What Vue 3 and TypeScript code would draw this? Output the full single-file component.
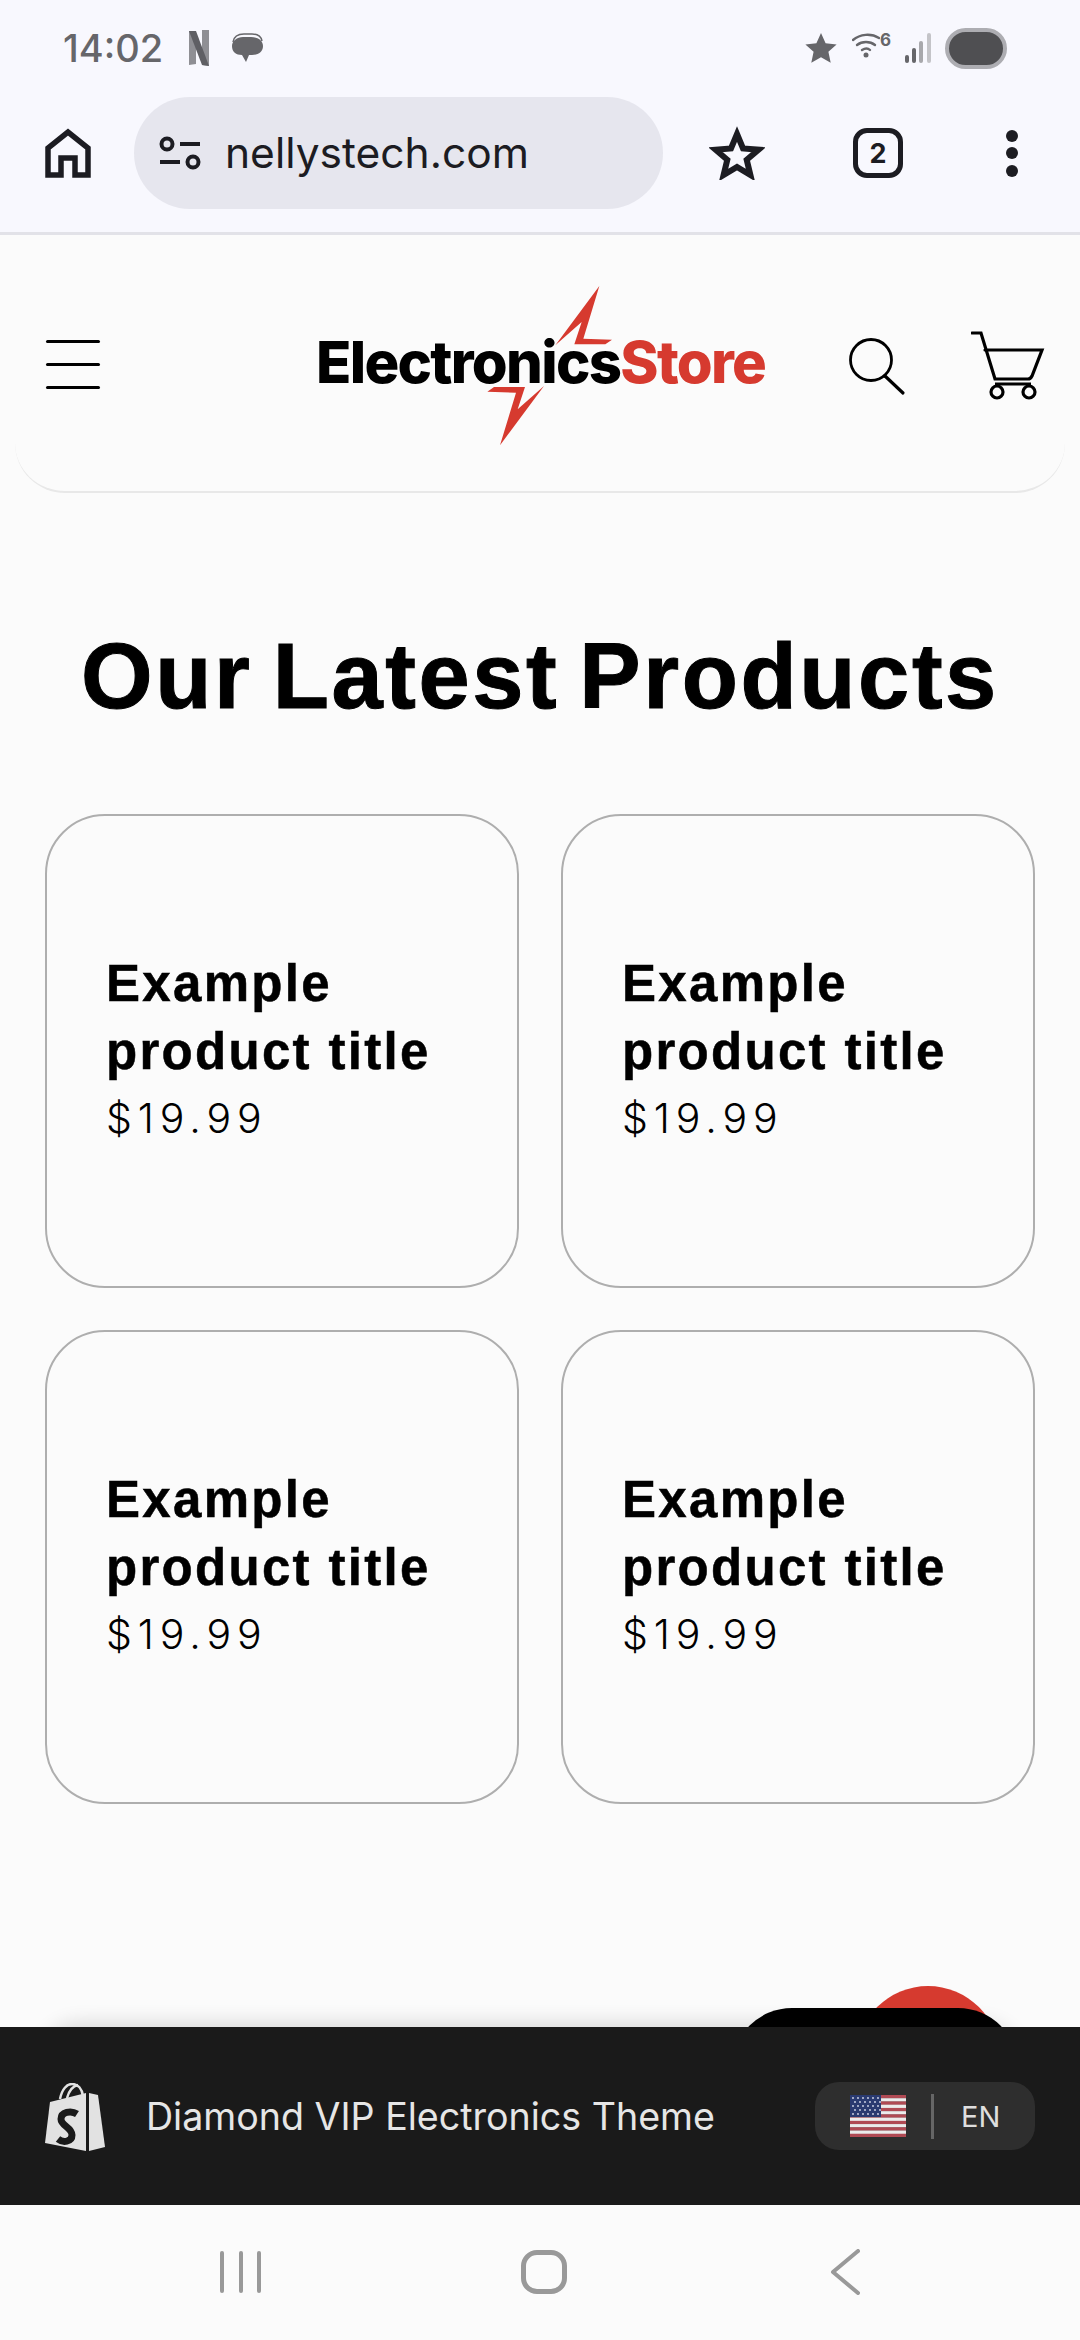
<template>
  <div class="phone">
    <div class="browser">
      <div class="status">
        <span class="time">14:02</span>
        <svg class="ic-n" width="20" height="36" viewBox="0 0 20 36">
          <path d="M0 1h7v33l-7 1z" fill="#8f8f94" />
          <path d="M13 0h7v36l-7-1z" fill="#8f8f94" />
          <path d="M0 1h7l13 35-7-1z" fill="#5f5f64" />
        </svg>
        <svg class="ic-chat" width="32" height="30" viewBox="0 0 32 30">
          <path d="M2 9C3 3 8 1 13 1h8c5 0 9 2 10 7" fill="none" stroke="#66666a" stroke-width="1.5" />
          <path d="M1 13c0-5 5-9 11-9h8c6 0 12 3 12 9s-5 9-11 9h-3l-3 7-4-7C5 22 1 19 1 13z" fill="#66666a" />
        </svg>
        <span class="status-gap"></span>
        <svg width="32" height="30" viewBox="0 0 32 30">
          <path d="M16 0l4.6 10.2 11 1.200-8.200 7.400 2.300 10.900L16 24.200 6.300 29.700l2.300-10.900L.4 11.400l11-1.200z" fill="#66666a" />
        </svg>
        <svg class="ic-wifi" width="28" height="28" viewBox="0 0 28 28">
          <g fill="none" stroke="#66666a" stroke-width="2.400" stroke-linecap="round">
            <path d="M1 9c7-6 18-7 26-2" />
            <path d="M5 14c5-4 13-4 18 0" />
            <path d="M10 19c3-2 6-2 8 0" />
          </g>
          <circle cx="14" cy="24" r="2.500" fill="#66666a" />
        </svg>
        <span class="wifi-six">6</span>
        <svg class="ic-signal" width="27" height="30" viewBox="0 0 27 30">
          <rect x="0" y="22" width="4" height="8" rx="2" fill="#66666a" />
          <rect x="7" y="15" width="4" height="15" rx="2" fill="#66666a" />
          <rect x="14" y="8" width="4" height="22" rx="2" fill="#a8a8ac" />
          <rect x="22" y="0" width="4" height="30" rx="2" fill="#c4c4c8" />
        </svg>
        <span class="battery"></span>
      </div>

      <div class="toolbar">
        <svg class="ic-home" width="46" height="50" viewBox="0 0 46 50">
          <path d="M3 47V20L23 4l20 16v27H30V30H16v17z" fill="none" stroke="#1c1c22" stroke-width="5.500" />
        </svg>
        <div class="address">
          <svg width="42" height="34" viewBox="0 0 42 34">
            <g fill="none" stroke="#1c1c22" stroke-width="4">
              <circle cx="8" cy="8" r="5.500" />
              <circle cx="34" cy="26" r="5.500" />
              <path d="M21 8h20M1 26h20" />
            </g>
          </svg>
          <span class="url">nellystech.com</span>
        </div>
        <svg class="ic-star" width="56" height="54" viewBox="0 0 56 54">
          <path d="M28 8l6 14.500 15.500 1.200-11.800 10.100 3.700 15.200L28 41l-13.400 8 3.700-15.200L6.500 23.700 22 22.500z" fill="none" stroke="#1c1c22" stroke-width="6" />
        </svg>
        <span class="tabs">2</span>
        <span class="dots"><i></i><i></i><i></i></span>
      </div>
    </div>

    <header class="site-head">
      <span class="burger"><i></i><i></i><i></i></span>
      <div class="logo">
        <span class="logo-black">Electronics</span><span class="logo-red">Store</span>
        <svg class="bolt" width="470" height="180" viewBox="0 0 1410 540">
          <path d="M898 30L766 208l79-70-22 67h93l20-14-86-3z" fill="#d63a2f" />
          <path d="M562 347l20-14h93l-22 67 79-70-132 178 48-158z" fill="#d63a2f" />
        </svg>
      </div>
      <svg class="ic-search" width="58" height="62" viewBox="0 0 58 62">
        <circle cx="23" cy="25" r="20.500" fill="none" stroke="#000" stroke-width="2.800" />
        <path d="M37 41l18 17" stroke="#000" stroke-width="3.200" stroke-linecap="round" />
      </svg>
      <svg class="ic-cart" width="74" height="70" viewBox="0 0 74 70">
        <g fill="none" stroke="#000" stroke-width="3.200">
          <path d="M1 2h9l14 46h33c2 0 3-1 4-3l10-26H14" stroke-linecap="round" />
          <path d="M24 53h36" />
          <circle cx="26" cy="61" r="6" />
          <circle cx="58" cy="61" r="6" />
        </g>
      </svg>
    </header>

    <main class="content">
      <h1 class="heading">Our Latest Products</h1>
      <div class="grid">
        <article v-for="p in products" :key="p.id" class="card">
          <h2 class="card-title">{{ p.title }}</h2>
          <p class="card-price">{{ p.price }}</p>
        </article>
      </div>
      <div class="peek-panel"></div>
      <div class="peek-red"></div>
      <div class="peek-black"></div>
    </main>

    <div class="promo">
      <svg class="ic-shop" width="60" height="68" viewBox="0 0 60 68">
        <g fill="none" stroke="#e2e2e2" stroke-width="2.500">
          <path d="M15 16C17 6 22 1 27 1c6 0 10 5 11 12" />
          <path d="M22 15C24 8 28 3 33 2" />
        </g>
        <path d="M5 19l36-9v58L0 60z" fill="#e2e2e2" />
        <path d="M44 10l9 2 7 52-16 4z" fill="#e2e2e2" />
        <path d="M32 31c-6-4-16-2-16 5 0 7 11 8 11 16 0 7-9 8-14 4" fill="none" stroke="#1a1a1a" stroke-width="7" />
      </svg>
      <span class="promo-text">Diamond VIP Electronics Theme</span>
      <div class="lang">
        <svg class="flag" width="56" height="42" viewBox="0 0 56 42">
          <rect v-for="(s, i) in stripes" :key="i" x="0" :y="s.y" width="56" :height="s.h" :fill="s.c" />
          <rect x="0" y="0" width="31" height="22" fill="#2a3a70" />
          <circle v-for="(d, i) in stars" :key="'s' + i" :cx="d.x" :cy="d.y" r="0.900" fill="#d8dcea" />
        </svg>
        <span class="lang-sep"></span>
        <span class="lang-code">EN</span>
      </div>
    </div>

    <nav class="sys-nav">
      <span class="recents"><i></i><i></i><i></i></span>
      <span class="home-key"></span>
      <svg width="30" height="46" viewBox="0 0 30 46">
        <path d="M28 2L3 23l25 21" fill="none" stroke="#999" stroke-width="4" stroke-linecap="round" stroke-linejoin="round" />
      </svg>
    </nav>
  </div>
</template>

<script setup lang="ts">
interface Product {
  id: number
  title: string
  price: string
}

const products: Product[] = [1, 2, 3, 4].map((id) => ({
  id,
  title: 'Example product title',
  price: '$19.99'
}))

// flag is drawn from data, 13 stripes and a 6x5 star field
const stripes = Array.from({ length: 13 }, (_, i) => ({
  y: (i * 42) / 13,
  h: 42 / 13 + 0.2,
  c: i % 2 ? '#ececec' : '#b04a54'
}))

const stars: { x: number; y: number }[] = []
for (let row = 0; row < 5; row++) {
  for (let col = 0; col < 6; col++) {
    stars.push({ x: 3 + col * 5 + (row % 2 ? 2 : 0), y: 3 + row * 4 })
  }
}
</script>

<style>
html,
body {
  margin: 0;
  background: #fbfbfb;
}
</style>

<style scoped>
.phone {
  width: 1080px;
  height: 2340px;
  display: flex;
  flex-direction: column;
  overflow: hidden;
  background: #fbfbfb;
  font-family: Inter, "Liberation Sans", sans-serif;
}

.browser {
  background: #f8f8fe;
  height: 232px;
  border-bottom: 3px solid #e2e2e8;
  flex: none;
}

.status {
  height: 97px;
  display: flex;
  align-items: center;
  padding-left: 63px;
  box-sizing: border-box;
  padding-bottom: 1px;
}

.time {
  font-size: 38px;
  font-weight: 500;
  color: #66666a;
  width: 126px;
  line-height: 1;
}

.ic-chat {
  margin-left: 22px;
}

.status-gap {
  flex: 1;
}

.ic-wifi {
  margin-left: 15px;
  margin-bottom: 6px;
}

.wifi-six {
  width: 10px;
  margin-bottom: 16px;
  font-size: 17px;
  line-height: 1;
  font-weight: 700;
  color: #66666a;
}

.ic-signal {
  margin-left: 15px;
}

.battery {
  width: 62px;
  height: 41px;
  box-sizing: border-box;
  margin: 0 73px 0 13px;
  border: 4px solid #adadb2;
  border-radius: 21px;
  background: #4f4f52;
}

.toolbar {
  height: 112px;
  display: flex;
  align-items: center;
  padding-left: 45px;
}

.ic-home {
  flex: none;
}

.address {
  width: 529px;
  height: 112px;
  margin-left: 43px;
  border-radius: 56px;
  background: #e6e6ee;
  display: flex;
  align-items: center;
  box-sizing: border-box;
  padding-left: 25px;
}

.url {
  margin-left: 24px;
  font-size: 42.500px;
  color: #1c1c22;
  line-height: 1;
}

.ic-star {
  margin-left: 46px;
}

.tabs {
  width: 50px;
  height: 50px;
  margin-left: 88px;
  box-sizing: border-box;
  border: 5.500px solid #1c1c22;
  border-radius: 14px;
  display: flex;
  align-items: center;
  justify-content: center;
  font-size: 27px;
  font-weight: 700;
  color: #1c1c22;
}

.dots {
  margin-left: 103px;
  display: flex;
  flex-direction: column;
  gap: 5.500px;
}

.dots i {
  display: block;
  width: 12px;
  height: 12px;
  border-radius: 50%;
  background: #1c1c22;
}

.site-head {
  position: relative;
  height: 258px;
  flex: none;
  margin: 0 15px;
  box-sizing: border-box;
  border-bottom: 2px solid #e8e8e8;
  border-radius: 0 0 50px 50px;
  display: flex;
  align-items: center;
  padding: 0 0 3px 31px;
}

.burger {
  display: flex;
  flex-direction: column;
  gap: 20px;
  width: 54px;
  margin-top: 6px;
}

.burger i {
  display: block;
  height: 3px;
  border-radius: 2px;
  background: #000;
}

.logo {
  position: relative;
  margin-left: 216px;
  width: 447px;
  font-size: 58px;
  font-weight: 800;
  letter-spacing: -1.700px;
  line-height: 1;
  white-space: nowrap;
}

.logo-black {
  color: #000;
}

.logo-red {
  color: #d63a2f;
}

.bolt {
  position: absolute;
  left: -16px;
  top: -57px;
}

.ic-search {
  margin-left: 85px;
  margin-top: 9px;
  flex: none;
}

.ic-cart {
  margin-left: 65px;
  margin-top: 9px;
  flex: none;
}

.content {
  position: relative;
  flex: 1;
  overflow: hidden;
  padding: 0 45px;
}

.heading {
  margin: 129px 0 0;
  height: 192px;
  font-family: "Liberation Sans", Arial, sans-serif;
  font-size: 92px;
  font-weight: 700;
  line-height: 108px;
  letter-spacing: 2.600px;
  word-spacing: -8px;
  -webkit-text-stroke: 1px #000;
  color: #000;
  text-align: center;
  white-space: nowrap;
}

.grid {
  display: grid;
  grid-template-columns: 474px 474px;
  gap: 42px;
}

.card {
  height: 474px;
  box-sizing: border-box;
  border: 2px solid #aeaeae;
  border-radius: 60px;
  padding: 0 60px 0 59px;
  display: flex;
  flex-direction: column;
  justify-content: center;
  color: #000;
}

.card-title {
  margin: -2px 0 0;
  font-family: "Liberation Sans", Arial, sans-serif;
  font-size: 51px;
  font-weight: 700;
  line-height: 68px;
  letter-spacing: 2.300px;
  -webkit-text-stroke: 0.5px #000;
}

.card-price {
  margin: 0;
  font-size: 41px;
  font-weight: 300;
  line-height: 64px;
  letter-spacing: 5.900px;
}

.peek-panel {
  position: absolute;
  left: 40px;
  right: 60px;
  bottom: -40px;
  height: 40px;
  border-radius: 60px 60px 0 0;
  background: #eee;
  box-shadow: 0 -4px 20px rgba(0, 0, 0, 0.14);
}

.peek-red {
  position: absolute;
  left: 856px;
  bottom: -103px;
  width: 144px;
  height: 144px;
  border-radius: 50%;
  background: #d63a2f;
}

.peek-black {
  position: absolute;
  left: 732px;
  bottom: -60px;
  width: 286px;
  height: 79px;
  border-radius: 60px 60px 0 0;
  background: #000;
}

.promo {
  height: 178px;
  flex: none;
  background: #1a1a1a;
  display: flex;
  align-items: center;
  padding: 0 45px;
  position: relative;
}

.ic-shop {
  flex: none;
  margin-top: 2px;
}

.promo-text {
  margin-left: 41px;
  font-size: 37.600px;
  color: #e6e6e6;
  white-space: nowrap;
  flex: 1;
}

.lang {
  width: 220px;
  height: 68px;
  border-radius: 24px;
  background: #2e2e2e;
  display: flex;
  align-items: center;
  box-sizing: border-box;
  padding-left: 35px;
}

.lang-sep {
  width: 3px;
  height: 45px;
  margin-left: 25px;
  background: #666;
}

.lang-code {
  margin-left: 27px;
  font-size: 29px;
  color: #dedede;
}

.sys-nav {
  height: 135px;
  flex: none;
  position: relative;
  display: flex;
  align-items: center;
  padding: 0 0 0 220px;
  box-sizing: border-box;
}

.recents {
  display: flex;
  gap: 14.500px;
  margin-top: -2px;
}

.recents i {
  display: block;
  width: 4px;
  height: 42px;
  border-radius: 2px;
  background: #999;
}

.home-key {
  width: 46px;
  height: 44px;
  margin-left: 260px;
  margin-top: -2px;
  box-sizing: border-box;
  border: 5px solid #999;
  border-radius: 16px;
}

.sys-nav svg {
  margin-left: 263px;
  margin-top: -2px;
}
</style>
